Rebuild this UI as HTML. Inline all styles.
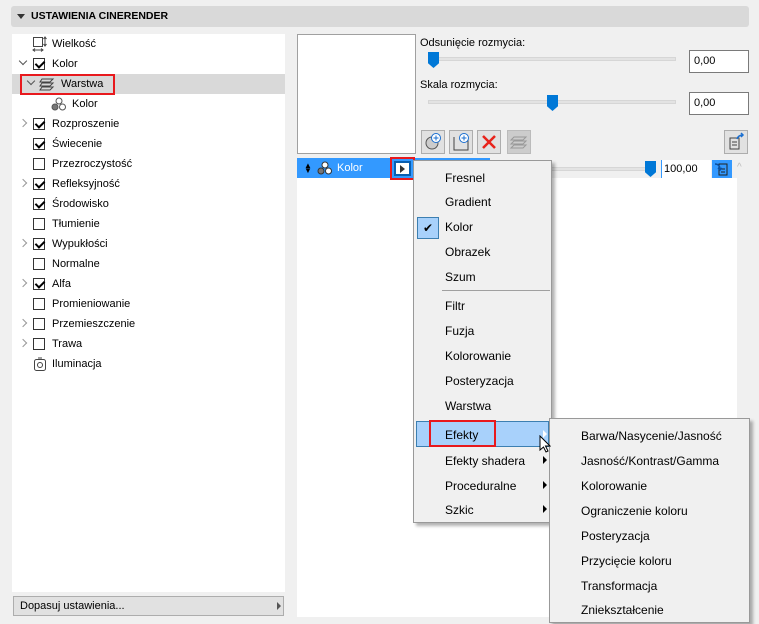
<!DOCTYPE html>
<html><head><style>
*{box-sizing:border-box;margin:0;padding:0}
body{width:759px;height:624px;background:#f0f0f0;font-family:"Liberation Sans",sans-serif;font-size:11px;color:#000;position:relative;overflow:hidden}
.a{position:absolute}
.hdr{left:11px;top:6px;width:738px;height:21px;background:#d9d9d9;border-radius:3px;font-weight:bold;font-size:10.5px;line-height:21px;padding-left:20px}
.tree{left:12px;top:34px;width:273px;height:558px;background:#fff}
.row{position:absolute;left:0;width:273px;height:20px;line-height:20px}
.row span.t{position:absolute;left:40px}
.cb{position:absolute;left:21px;top:4px;width:12px;height:12px;border:1px solid #333;background:#fff}
.cb.c::after{content:"";position:absolute;left:3px;top:0px;width:4px;height:7px;border:solid #000;border-width:0 2px 2px 0;transform:rotate(45deg)}
.chev{position:absolute;left:8px;top:6px;width:6px;height:6px;border:solid #999;border-width:0 1.5px 1.5px 0;transform:rotate(-45deg)}
.chev.d{transform:rotate(45deg);top:4px;border-color:#555}
.menu{background:#f0f0f0;border:1px solid #999;box-shadow:3px 3px 3px rgba(0,0,0,.3);font-size:12px}
.mi{position:absolute;left:31px;height:20px;line-height:20px}
.ar{position:absolute;left:129px;width:0;height:0;border-left:4px solid #000;border-top:4px solid transparent;border-bottom:4px solid transparent}
.inp{background:#fff;border:1px solid #7a7a7a;line-height:20px;padding-left:4px;font-size:11px}
.track{height:4px;background:#e3e3e3;border:1px solid #d6d6d6}
.thumb{width:11px;height:16px;background:#0078d7;clip-path:polygon(0 0,100% 0,100% 70%,50% 100%,0 70%)}
.btn{width:24px;height:24px;border:1px solid #adadad;background:#e1e1e1}
</style></head><body>
<div class="a hdr">USTAWIENIA CINERENDER</div>
<div class="a" style="left:17px;top:14px;width:0;height:0;border-top:5px solid #333;border-left:4px solid transparent;border-right:4px solid transparent"></div>

<div class="a tree">
 <div class="row" style="top:0"><svg class="a" style="left:20px;top:2px" width="16" height="16"><rect x="1.5" y="1.5" width="9" height="9" fill="none" stroke="#444"/><path d="M13 1v9M11.5 3l1.5-2 1.5 2M11.5 8l1.5 2 1.5-2M1 14h10M3 12.5l-2 1.5 2 1.5M9 12.5l2 1.5-2 1.5" stroke="#444" fill="none"/></svg><span class="t">Wielkość</span></div>
 <div class="row" style="top:20px"><div class="chev d"></div><div class="cb c"></div><span class="t">Kolor</span></div>
 <div class="row" style="top:40px;background:#d9d9d9"><div class="a" style="left:8px;top:0;width:95px;height:21px;border:2px solid #e8191d"></div><div class="chev d" style="left:16px"></div><svg class="a" style="left:27px;top:3px" width="16" height="14"><path d="M3 2h11l-3 3H1zM3 6h11l-3 3H1zM3 10h11l-3 3H1z" fill="none" stroke="#444"/></svg><span class="t" style="left:49px">Warstwa</span></div>
 <div class="row" style="top:60px"><svg class="a" style="left:39px;top:3px" width="16" height="14"><circle cx="8" cy="4" r="3" fill="#fff" stroke="#555"/><circle cx="4" cy="10" r="3" fill="#777" stroke="#555"/><circle cx="11.5" cy="10" r="3" fill="#fff" stroke="#555"/></svg><span class="t" style="left:60px">Kolor</span></div>
 <div class="row" style="top:80px"><div class="chev"></div><div class="cb c"></div><span class="t">Rozproszenie</span></div>
 <div class="row" style="top:100px"><div class="cb c"></div><span class="t">Świecenie</span></div>
 <div class="row" style="top:120px"><div class="cb"></div><span class="t">Przezroczystość</span></div>
 <div class="row" style="top:140px"><div class="chev"></div><div class="cb c"></div><span class="t">Refleksyjność</span></div>
 <div class="row" style="top:160px"><div class="cb c"></div><span class="t">Środowisko</span></div>
 <div class="row" style="top:180px"><div class="cb"></div><span class="t">Tłumienie</span></div>
 <div class="row" style="top:200px"><div class="chev"></div><div class="cb c"></div><span class="t">Wypukłości</span></div>
 <div class="row" style="top:220px"><div class="cb"></div><span class="t">Normalne</span></div>
 <div class="row" style="top:240px"><div class="chev"></div><div class="cb c"></div><span class="t">Alfa</span></div>
 <div class="row" style="top:260px"><div class="cb"></div><span class="t">Promieniowanie</span></div>
 <div class="row" style="top:280px"><div class="chev"></div><div class="cb"></div><span class="t">Przemieszczenie</span></div>
 <div class="row" style="top:300px"><div class="chev"></div><div class="cb"></div><span class="t">Trawa</span></div>
 <div class="row" style="top:320px"><svg class="a" style="left:21px;top:3px" width="14" height="14"><rect x="1.5" y="2.5" width="11" height="11" rx="2" fill="none" stroke="#444"/><circle cx="7" cy="8" r="2.5" fill="none" stroke="#444"/><path d="M5 1h4" stroke="#444"/></svg><span class="t">Iluminacja</span></div>
</div>
<div class="a" style="left:13px;top:596px;width:271px;height:20px;background:#e1e1e1;border:1px solid #adadad;line-height:18px;padding-left:6px">Dopasuj ustawienia...</div>
<div class="a" style="left:277px;top:602px;border-left:4px solid #555;border-top:4px solid transparent;border-bottom:4px solid transparent"></div>

<div class="a" style="left:297px;top:34px;width:119px;height:120px;background:#fff;border:1px solid #a0a0a0"></div>
<div class="a" style="left:420px;top:37px;font-size:11px">Odsunięcie rozmycia:</div>
<div class="a track" style="left:428px;top:57px;width:248px"></div>
<div class="a thumb" style="left:428px;top:52px"></div>
<div class="a inp" style="left:689px;top:50px;width:60px;height:23px">0,00</div>
<div class="a" style="left:420px;top:79px">Skala rozmycia:</div>
<div class="a track" style="left:428px;top:100px;width:248px"></div>
<div class="a thumb" style="left:547px;top:95px"></div>
<div class="a inp" style="left:689px;top:92px;width:60px;height:23px">0,00</div>
<div class="a btn" style="left:421px;top:130px"><svg width="22" height="22"><circle cx="10" cy="12" r="6" fill="#ccc" stroke="#555"/><circle cx="14" cy="7" r="4.5" fill="#fff" stroke="#1a6fd1"/><path d="M14 4.5v5M11.5 7h5" stroke="#1a6fd1"/></svg></div>
<div class="a btn" style="left:449px;top:130px"><svg width="22" height="22"><path d="M4 6v13h14V9" fill="none" stroke="#444"/><circle cx="14" cy="7" r="4.5" fill="#fff" stroke="#1a6fd1"/><path d="M14 4.5v5M11.5 7h5" stroke="#1a6fd1"/></svg></div>
<div class="a btn" style="left:477px;top:130px"><svg width="22" height="22"><path d="M5 5l12 12M17 5L5 17" stroke="#e8231a" stroke-width="2.5"/></svg></div>
<div class="a btn" style="left:507px;top:130px;background:#ccc;border-color:#bbb"><svg width="22" height="22"><path d="M6 6h12l-3 3H3zM6 10h12l-3 3H3zM6 14h12l-3 3H3z" fill="none" stroke="#999"/></svg></div>
<div class="a btn" style="left:724px;top:130px"><svg width="22" height="22"><path d="M5 7h9v11H5zM7 11h5M7 14h5" fill="none" stroke="#444"/><path d="M12 8c1-3 3-4 6-4M16 2l2 2-2 2" fill="none" stroke="#1a6fd1" stroke-width="1.5"/></svg></div>

<div class="a" style="left:297px;top:178px;width:440px;height:439px;background:#fff"></div>
<div class="a" style="left:297px;top:158px;width:117px;height:20px;background:#3399ff"></div>
<div class="a" style="left:414px;top:158px;width:76px;height:2px;background:#3399ff"></div>
<div class="a" style="left:304px;top:163px;color:#000;font-size:8px;line-height:5px">▲<br>▼</div>
<svg class="a" style="left:317px;top:161px" width="16" height="14"><circle cx="8" cy="4" r="3" fill="#fff" stroke="#333"/><circle cx="4" cy="10" r="3" fill="#777" stroke="#333"/><circle cx="11.5" cy="10" r="3" fill="#fff" stroke="#333"/></svg>
<div class="a" style="left:337px;top:158px;line-height:20px;color:#fff">Kolor</div>
<div class="a" style="left:390px;top:157px;width:25px;height:23px;border:2px solid #e8191d;background:#3399ff"><div style="margin:2px;width:17px;height:15px;background:#fff;border:2px solid #0a5fb0;position:relative"><div class="a" style="left:4px;top:2px;border-left:5px solid #333;border-top:4px solid transparent;border-bottom:4px solid transparent"></div></div></div>
<div class="a track" style="left:550px;top:167px;width:102px"></div>
<div class="a thumb" style="left:645px;top:161px"></div>
<div class="a" style="left:661px;top:160px;width:50px;height:18px;background:#fff;border-left:1px solid #3399ff;line-height:18px;padding-left:2px">100,00</div>
<div class="a" style="left:712px;top:160px;width:20px;height:18px;background:#3399ff"><svg width="20" height="18"><path d="M7 4h8v11H7zM9 9h4M9 12h4" fill="none" stroke="#222"/><path d="M3 4c3 0 5 2 5 5M6 8l2 2 2-2" fill="none" stroke="#0a4fa0" stroke-width="1.5"/></svg></div>
<div class="a" style="left:737px;top:162px;color:#bbb;font-size:10px">^</div>

<div class="a menu" style="left:413px;top:160px;width:139px;height:363px">
 <div class="mi" style="top:7px">Fresnel</div>
 <div class="mi" style="top:31px">Gradient</div>
 <div class="a" style="left:3px;top:56px;width:22px;height:22px;background:#a8d1fb;border:1px solid #3c7fb1;text-align:center;line-height:20px;font-size:12px">✔</div>
 <div class="mi" style="top:56px">Kolor</div>
 <div class="mi" style="top:81px">Obrazek</div>
 <div class="mi" style="top:106px">Szum</div>
 <div class="a" style="left:28px;top:129px;width:108px;height:1px;background:#a0a0a0"></div>
 <div class="mi" style="top:135px">Filtr</div>
 <div class="mi" style="top:160px">Fuzja</div>
 <div class="mi" style="top:185px">Kolorowanie</div>
 <div class="mi" style="top:210px">Posteryzacja</div>
 <div class="mi" style="top:235px">Warstwa</div>
 <div class="a" style="left:2px;top:260px;width:133px;height:26px;background:#a8d1fb;border:1px solid #3c7fb1"></div>
 <div class="a" style="left:15px;top:259px;width:67px;height:27px;border:2px solid #e8191d"></div>
 <div class="mi" style="top:264px">Efekty</div>
 <div class="ar" style="top:269px;border-left-color:#fff"></div>
 <div class="mi" style="top:290px">Efekty shadera</div><div class="ar" style="top:295px"></div>
 <div class="mi" style="top:315px">Proceduralne</div><div class="ar" style="top:320px"></div>
 <div class="mi" style="top:339px">Szkic</div><div class="ar" style="top:344px"></div>
</div>
<div class="a menu" style="left:549px;top:418px;width:201px;height:205px">
 <div class="mi" style="top:7px">Barwa/Nasycenie/Jasność</div>
 <div class="mi" style="top:32px">Jasność/Kontrast/Gamma</div>
 <div class="mi" style="top:57px">Kolorowanie</div>
 <div class="mi" style="top:82px">Ograniczenie koloru</div>
 <div class="mi" style="top:107px">Posteryzacja</div>
 <div class="mi" style="top:132px">Przycięcie koloru</div>
 <div class="mi" style="top:157px">Transformacja</div>
 <div class="mi" style="top:181px">Zniekształcenie</div>
</div>
<svg class="a" style="left:539px;top:435px" width="12" height="20"><path d="M1 1v14l3.5-3 2.5 5 2-1-2.5-5H11z" fill="#fff" stroke="#000"/></svg>
</body></html>
